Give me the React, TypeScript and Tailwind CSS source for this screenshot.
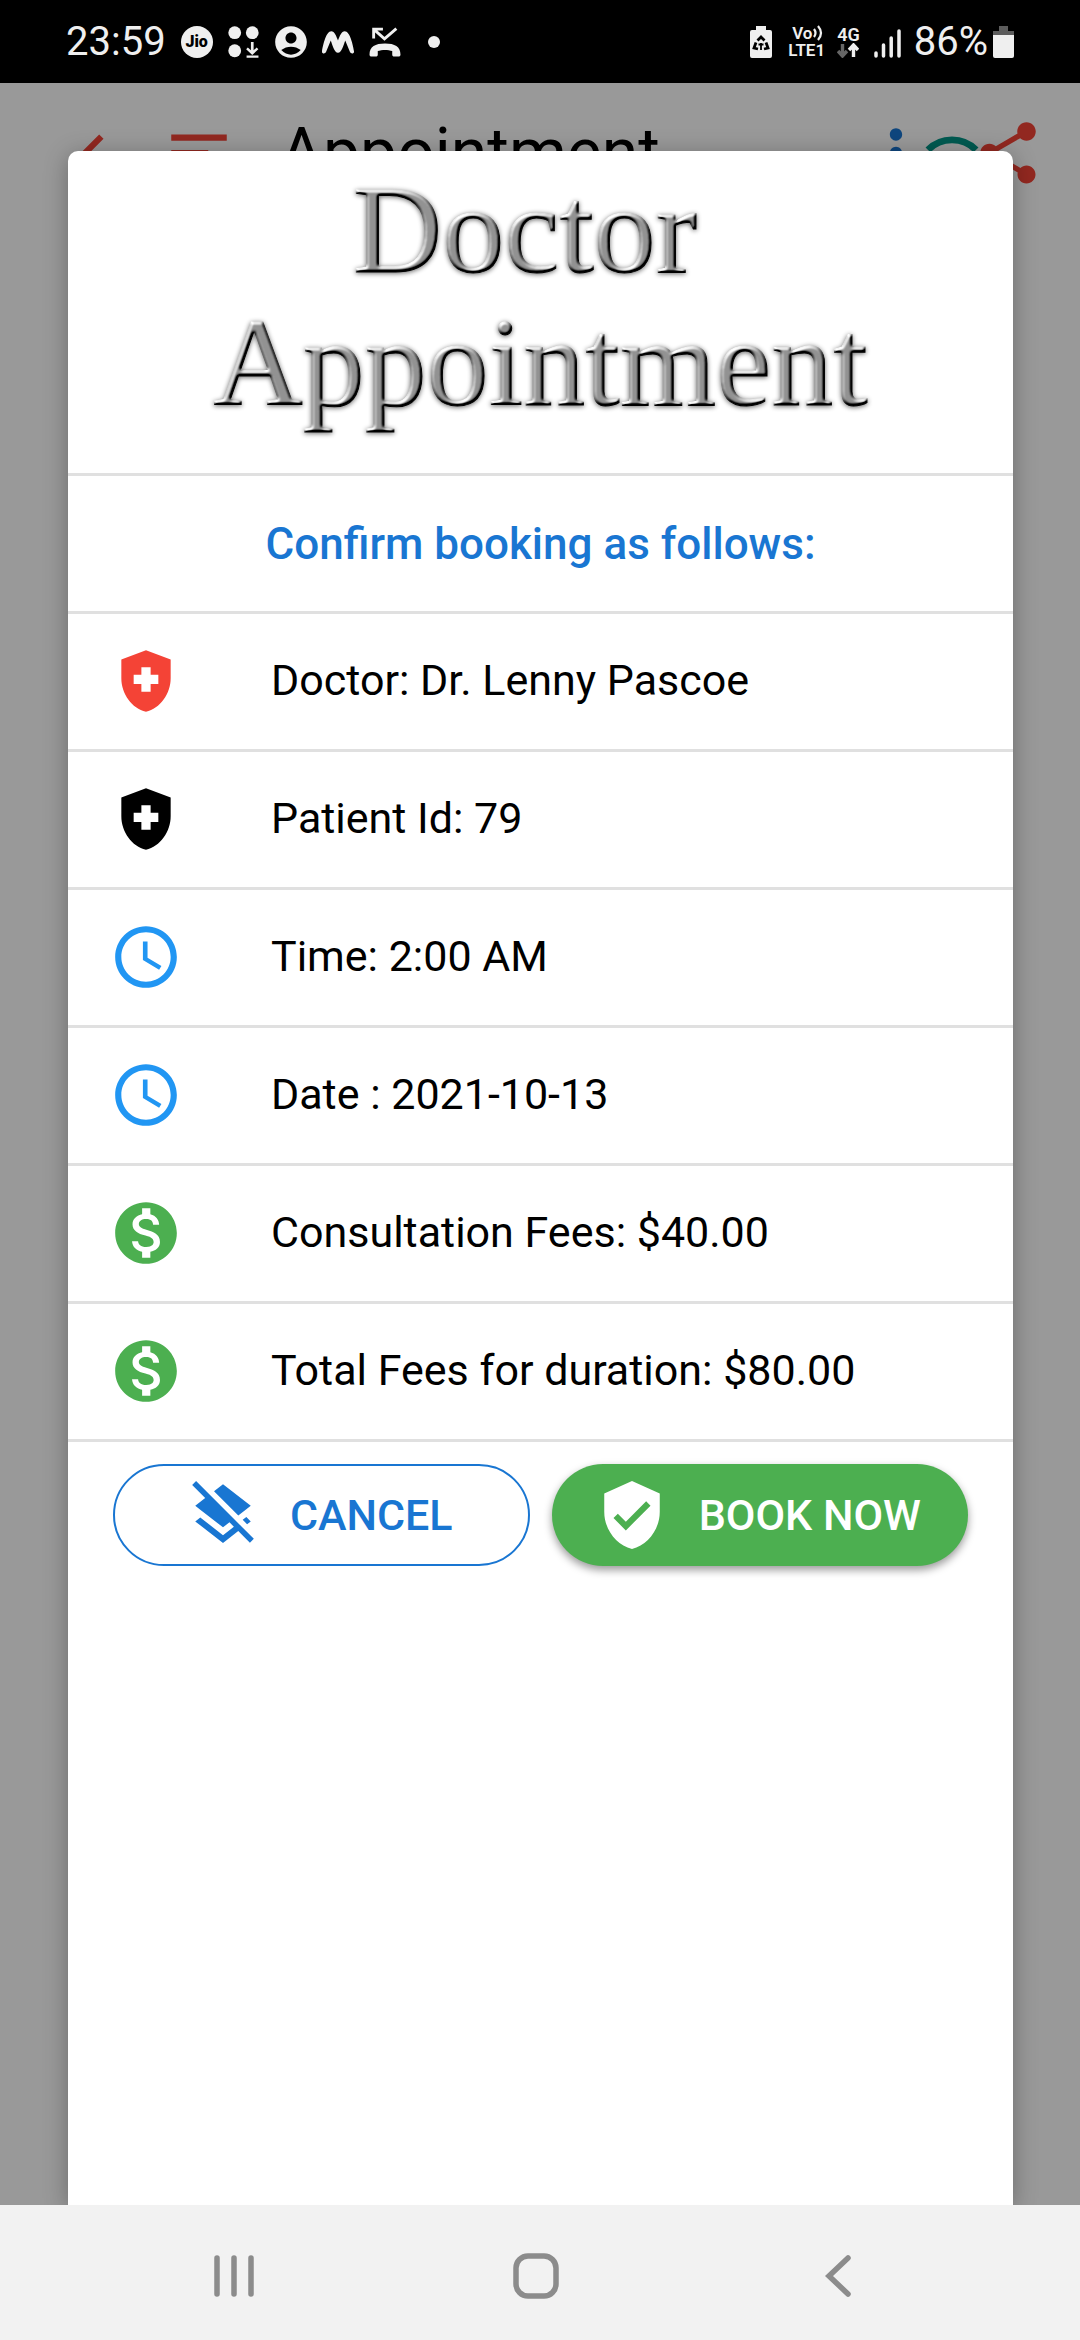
import type { ReactNode } from "react";
import {
  MdAccessTime,
  MdAccountCircle,
  MdChevronLeft,
  MdHealthAndSafety,
  MdLayersClear,
  MdMonetizationOn,
  MdMoreVert,
  MdShare,
  MdSort,
  MdVerifiedUser,
} from "react-icons/md";

function StatusBar() {
  return (
    <header className="flex h-[83px] items-center justify-between bg-black pl-[66px] pr-[66px] text-[#efefef]">
      <div className="flex items-center gap-[15px]">
        <span className="text-[40px] leading-none">23:59</span>
        <span className="flex size-8 items-center justify-center rounded-full bg-[#efefef] text-[16px] font-black leading-none text-black">
          Jio
        </span>
        <svg viewBox="0 0 31 31" className="size-8" fill="currentColor" aria-hidden="true">
          <circle cx="6.5" cy="6.5" r="6.2" />
          <circle cx="23.5" cy="6.5" r="6.2" />
          <circle cx="6.5" cy="24" r="6.2" />
          <path d="M22.200 15.500h2.600v8l3-2.700 1.600 1.700-5.900 5.500-5.900-5.500 1.600-1.700 3 2.700zM18 28.500h11.500v2.200H18z" />
        </svg>
        <MdAccountCircle className="size-[38px] -mx-[3px]" />
        <svg viewBox="0 0 31 31" className="size-8" fill="currentColor" aria-hidden="true">
          <path d="M0 24.500C1 18 4 5 9 5c3.200 0 4.800 4.500 6.500 9C17.200 9.500 18.800 5 22 5c5 0 8 13 9 19.500.3 2.500-3 2.800-4 .500L22.500 14c-1.500 4-3.500 12-7 12s-5.500-8-7-12L4 25c-1 2.300-4.300 2-4-.500z" />
        </svg>
        <svg viewBox="0 0 31 31" className="size-8" aria-hidden="true">
          <path d="M5 3.500 15 12.500 26.500 2.500M4.500 12V3h9" fill="none" stroke="currentColor" strokeWidth="2.800" />
          <path d="M.5 27.500C.5 20 6 17 15.500 17s15 3 15 10.500c0 1.500-.7 2-2 2h-4c-1.300 0-2-.7-2-2v-3.200c-4-1.500-10-1.500-14 0v3.200c0 1.300-.7 2-2 2h-4c-1.300 0-2-.5-2-2z" fill="currentColor" />
        </svg>
        <span className="ml-3 size-3 rounded-full bg-[#efefef]" />
      </div>
      <div className="flex items-center">
        <svg viewBox="0 0 22 32" className="h-8 w-[22px]" aria-hidden="true">
          <path d="M6 0h10v4h4a2 2 0 0 1 2 2v24a2 2 0 0 1-2 2H2a2 2 0 0 1-2-2V6a2 2 0 0 1 2-2h4z" fill="currentColor" />
          <path d="M7.500 14.500 11 11l3.500 3.500M16 16.500l2 5.500-4 1M8 23l-4-1 2-5.500" fill="none" stroke="#000" strokeWidth="2.800" />
          <path d="M11 24v-7M8.500 18.500h5" stroke="#000" strokeWidth="1.800" />
        </svg>
        <div className="ml-4 flex flex-col text-[17px] font-semibold leading-[17px]">
          <span className="flex items-center pl-1">
            Vo
            <svg viewBox="0 0 12 16" className="h-4 w-3" fill="none" stroke="currentColor" strokeWidth="2.200" aria-hidden="true">
              <path d="M2 4q3 4 0 8M6 1q6 7 0 14" />
            </svg>
          </span>
          <span>LTE1</span>
        </div>
        <div className="ml-3 flex flex-col items-center text-[18px] font-semibold leading-[17px]">
          <span>4G</span>
          <svg viewBox="0 0 22 15" className="h-[15px] w-[22px]" fill="none" strokeWidth="3.400" aria-hidden="true">
            <path d="M5.500 1v11M1 8l4.500 5L10 8" stroke="#666" />
            <path d="M16.500 14V3M12 7l4.500-5L21 7" stroke="currentColor" />
          </svg>
        </div>
        <svg viewBox="0 0 27 32" className="ml-[14px] h-8 w-[27px]" fill="none" stroke="currentColor" strokeWidth="3.500" strokeLinecap="round" aria-hidden="true">
          <path d="M2 27v3M9.500 19v11M17.200 12v18M25 5v25" />
        </svg>
        <span className="ml-[13px] text-[40px] leading-none">86%</span>
        <svg viewBox="0 0 21 32" className="ml-[5px] h-8 w-[21px]" aria-hidden="true">
          <path d="M6 0h9v5h6v4H0V5h6z" fill="#5c5c5c" />
          <path d="M0 9h21v21a2 2 0 0 1-2 2H2a2 2 0 0 1-2-2z" fill="currentColor" />
        </svg>
      </div>
    </header>
  );
}

function Toolbar() {
  return (
    <div className="flex h-[140px] items-center bg-white pl-14 pr-[44px] [grid-area:1/1]">
      <button type="button" aria-label="Back" className="text-[#f44336]">
        <MdChevronLeft className="size-[74px]" />
      </button>
      <button type="button" aria-label="Menu" className="ml-8 text-[#f44336]">
        <MdSort className="size-[74px]" />
      </button>
      <h1 className="ml-11 flex-1 text-[66px] leading-none text-black">Appointment</h1>
      <button type="button" aria-label="More options" className="flex w-14 justify-center text-[#1976d2]">
        <MdMoreVert className="size-[74px] shrink-0" />
      </button>
      <button type="button" aria-label="Connection" className="flex w-14 justify-center text-[#009688]">
        <svg viewBox="0 0 24 24" className="size-[74px] shrink-0" fill="none" stroke="currentColor" strokeWidth="2.200" aria-hidden="true">
          <path d="M4.200 11A11 11 0 0 1 19.800 11" />
        </svg>
      </button>
      <button type="button" aria-label="Share" className="flex w-14 justify-center text-[#f44336]">
        <MdShare className="size-[74px] shrink-0" />
      </button>
    </div>
  );
}

const icon = "size-[74px] shrink-0";

const details: { icon: ReactNode; text: string }[] = [
  { icon: <MdHealthAndSafety className={icon} color="#f44336" />, text: "Doctor: Dr. Lenny Pascoe" },
  { icon: <MdHealthAndSafety className={icon} color="#000000" />, text: "Patient Id: 79" },
  { icon: <MdAccessTime className={icon} color="#2196f3" />, text: "Time: 2:00 AM" },
  { icon: <MdAccessTime className={icon} color="#2196f3" />, text: "Date : 2021-10-13" },
  { icon: <MdMonetizationOn className={icon} color="#4caf50" />, text: "Consultation Fees: $40.00" },
  { icon: <MdMonetizationOn className={icon} color="#4caf50" />, text: "Total Fees for duration: $80.00" },
];

function BevelFilter() {
  return (
    <svg className="absolute size-0" aria-hidden="true">
      <filter id="bevel" x="-5%" y="-5%" width="110%" height="110%" colorInterpolationFilters="sRGB">
        <feGaussianBlur in="SourceAlpha" stdDeviation="1.800" result="soft" />
        <feDiffuseLighting in="soft" surfaceScale="4" diffuseConstant="1" lightingColor="#ffffff" result="lit">
          <feDistantLight azimuth="240" elevation="35" />
        </feDiffuseLighting>
        <feComposite in="lit" in2="SourceAlpha" operator="in" result="face" />
        <feGaussianBlur in="SourceAlpha" stdDeviation="2.500" />
        <feOffset dx="0" dy="1" />
        <feComponentTransfer result="shade">
          <feFuncA type="linear" slope="0.600" />
        </feComponentTransfer>
        <feMerge>
          <feMergeNode in="shade" />
          <feMergeNode in="face" />
        </feMerge>
      </filter>
    </svg>
  );
}

function BookingDialog() {
  return (
    <section
      role="dialog"
      aria-label="Doctor Appointment"
      className="flex flex-1 flex-col rounded-t-[10px] bg-white shadow-[0_4px_24px_rgba(0,0,0,0.3)]"
    >
      <BevelFilter />
      <div className="border-b-[3px] border-[#e0e0e0] pb-[43px] pt-[13px]">
        <h2 className="text-center font-['Liberation_Serif',serif] text-[124px] leading-[133px] [-webkit-text-stroke:1px_black] [filter:url(#bevel)]">
          Doctor&nbsp;
          <br />
          Appointment
        </h2>
      </div>
      <p className="flex min-h-[138px] items-center justify-center border-b-[3px] border-[#e0e0e0] text-[44px] font-medium text-[#1976d2]">
        Confirm booking as follows:
      </p>
      <ul>
        {details.map((row) => (
          <li
            key={row.text}
            className="flex min-h-[138px] items-center gap-[88px] border-b-[3px] border-[#e0e0e0] pb-[2px] pl-[41px] pr-4"
          >
            {row.icon}
            <span>{row.text}</span>
          </li>
        ))}
      </ul>
      <div className="grid grid-cols-2 gap-[22px] px-[45px] pt-[22px] font-medium">
        <button
          type="button"
          className="flex h-[102px] items-center justify-center gap-[30px] rounded-full border-2 border-[#1976d2] pr-1 text-[#1976d2]"
        >
          <MdLayersClear className="size-[74px]" />
          CANCEL
        </button>
        <button
          type="button"
          className="flex h-[102px] items-center justify-center gap-[30px] rounded-full bg-[#4caf50] pr-1 text-white shadow-[0_4px_8px_rgba(0,0,0,0.4)]"
        >
          <MdVerifiedUser className="size-[74px]" />
          BOOK NOW
        </button>
      </div>
    </section>
  );
}

function NavBar() {
  return (
    <nav className="flex h-[135px] items-center justify-center gap-64 bg-[#f2f2f2] pr-2 pt-[6px] text-[#8c8c8c]">
      <button type="button" aria-label="Recent apps">
        <svg viewBox="0 0 46 46" className="size-[46px]" fill="none" stroke="currentColor" strokeWidth="5.500" strokeLinecap="round">
          <path d="M6 5v36M23 5v36M40 5v36" />
        </svg>
      </button>
      <button type="button" aria-label="Home">
        <svg viewBox="0 0 46 46" className="size-[46px]" fill="none" stroke="currentColor" strokeWidth="5.500">
          <rect x="3" y="3" width="40" height="40" rx="12" />
        </svg>
      </button>
      <button type="button" aria-label="Back">
        <svg viewBox="0 0 46 46" className="size-[46px]" fill="none" stroke="currentColor" strokeWidth="5.500" strokeLinecap="round">
          <path d="M33 5 14 23l19 18" />
        </svg>
      </button>
    </nav>
  );
}

export default function App() {
  return (
    <div className="flex min-h-screen flex-col font-[Roboto,sans-serif] text-[43px] leading-none text-black">
      <StatusBar />
      <main className="grid flex-1 overflow-hidden bg-white">
        <Toolbar />
        <div className="relative flex bg-black/40 pl-[68px] pr-[67px] pt-[68px] [grid-area:1/1]">
          <BookingDialog />
        </div>
      </main>
      <NavBar />
    </div>
  );
}
